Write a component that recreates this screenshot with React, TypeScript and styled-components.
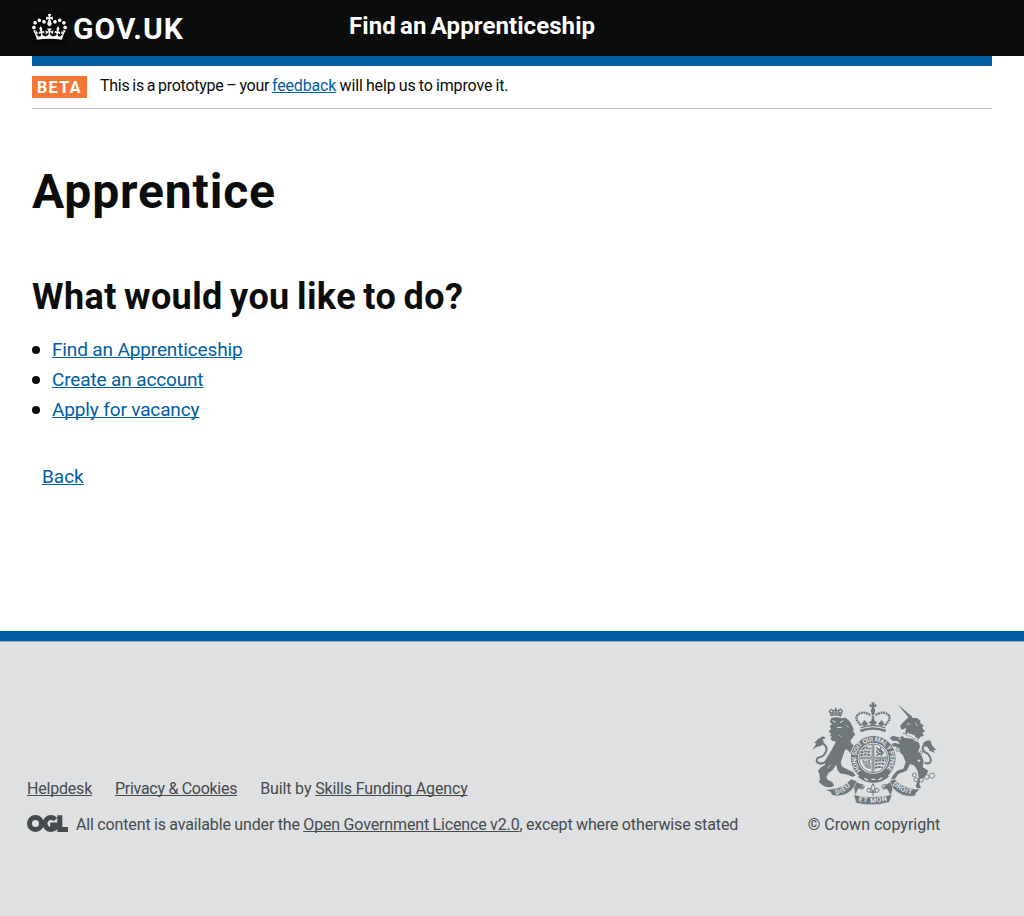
import React from "react";
import styled, { createGlobalStyle, css } from "styled-components";

const GlobalStyle = createGlobalStyle`
  * { box-sizing: border-box; }
  body {
    margin: 0;
    background: #fff;
    color: #0b0c0c;
    font-family: Roboto, "Liberation Sans", Arial, sans-serif;
  }
`;

const Page = styled.div`
  display: flex;
  flex-direction: column;
  min-height: 916px;
`;

const Header = styled.header`
  display: flex;
  height: 56px;
  padding: 0 32px;
  background: #0b0c0c;
  color: #fff;
`;

const LogoLink = styled.a`
  display: flex;
  align-items: flex-start;
  width: 317px;
  padding-top: 14px;
  color: #fff;
  text-decoration: none;
`;

const CrownBox = styled.span`
  display: flex;
  width: 35px;
  height: 30px;
  margin-right: 6px;
  background: #070808;
`;

const Wordmark = styled.span`
  font-size: 30px;
  font-weight: 700;
  line-height: 30px;
  letter-spacing: 1px;
`;

const ServiceName = styled.span`
  padding-top: 11px;
  font-size: 24px;
  font-weight: 700;
  line-height: 30px;
  white-space: nowrap;
  letter-spacing: 0.08px;
  word-spacing: -1.8px;
`;

const Container = styled.div`
  margin: 0 32px;
`;

const BlueBar = styled.div`
  height: 10px;
  background: #005ea5;
`;

const PhaseBanner = styled.div`
  display: flex;
  align-items: flex-start;
  height: 43px;
  padding-top: 10px;
  border-bottom: 1px solid #bfc1c3;
`;

const PhaseTag = styled.strong`
  width: 55px;
  height: 22px;
  margin-right: 13px;
  padding-left: 5px;
  background: #f47738;
  color: #fff;
  font-size: 16px;
  line-height: 23px;
  letter-spacing: 1.4px;
`;

const Link = styled.a<{ $tone?: "blue" | "grey"; $spacing?: number }>`
  color: ${(p) => (p.$tone === "grey" ? "#454a4c" : "#005ea5")};
  text-decoration: underline;
  text-decoration-thickness: 1px;
  text-underline-offset: 1px;
  text-decoration-skip-ink: none;
  ${(p) => p.$spacing !== undefined && css`letter-spacing: ${p.$spacing}px;`}
`;

const PhaseText = styled.span`
  font-size: 16px;
  line-height: 20px;
  letter-spacing: -0.16px;
  word-spacing: -0.5px;
`;

const PhaseIntro = styled.span`
  letter-spacing: -0.28px;
  word-spacing: -0.8px;
`;

const Heading = styled.h1`
  margin: 55px 0 0;
  font-size: 48px;
  font-weight: 700;
  line-height: 56px;
  letter-spacing: 0.85px;
`;

const SubHeading = styled.h2`
  margin: 56px 0 0;
  font-size: 36px;
  font-weight: 700;
  line-height: 42px;
  letter-spacing: 0.4px;
  word-spacing: -2px;
`;

const LinkList = styled.ul`
  margin: 17px 0 0;
  padding: 0;
  list-style: none;
`;

const LinkItem = styled.li`
  display: flex;
  align-items: center;
  gap: 12px;
  height: 30px;
  font-size: 19px;
  line-height: 30px;
  letter-spacing: -0.14px;

  &::before {
    content: "";
    width: 8px;
    height: 8px;
    border-radius: 50%;
    background: #0b0c0c;
  }
`;

const BackRow = styled.p`
  margin: 37px 0 0 10px;
  font-size: 19px;
  line-height: 30px;
`;

const Main = styled.main`
  display: flow-root;
  height: 522px;
`;

const Footer = styled.footer`
  display: flex;
  flex: 1;
  border-top: 10px solid #005ea5;
  background: #dee0e2;
  box-shadow: inset 0 1px 0 #a1acb2;
  color: #454a4c;
  font-size: 16px;
  line-height: 20px;
`;

const FooterMeta = styled.div`
  width: 808px;
  padding: 138px 0 0 27px;
  white-space: nowrap;
  letter-spacing: -0.13px;
`;

const FooterLinks = styled.div`
  display: flex;
  gap: 23px;
`;

const Licence = styled.div`
  display: flex;
  align-items: flex-start;
  gap: 8px;
  margin-top: 16px;
  word-spacing: -0.4px;
`;

const Copyright = styled.div`
  display: flex;
  flex-direction: column;
  align-items: center;
  width: 132px;
  padding-top: 61px;
  white-space: nowrap;
`;

const CopyrightText = styled.span`
  margin-top: 10px;
`;

const Crown = () => (
  <svg width="35" height="26" viewBox="0 0 132 97" preserveAspectRatio="none" aria-hidden="true">
    <path
      fill="#fff"
      fillRule="evenodd"
      d="M25 30.2c3.5 1.5 7.7-.2 9.1-3.7 1.5-3.6-.2-7.8-3.9-9.2-3.6-1.4-7.6.3-9.1 3.9-1.4 3.5.3 7.5 3.9 9zM9 39.5c3.6 1.5 7.8-.2 9.2-3.7 1.5-3.6-.2-7.8-3.9-9.1-3.6-1.5-7.6.2-9.1 3.8-1.4 3.5.3 7.5 3.8 9zM4.4 57.2c3.5 1.5 7.7-.2 9.1-3.8 1.5-3.6-.2-7.7-3.9-9.1-3.5-1.5-7.6.3-9.1 3.8-1.4 3.5.3 7.6 3.9 9.1zm38.3-21.4c3.5 1.5 7.7-.2 9.1-3.8 1.5-3.6-.2-7.7-3.9-9.1-3.6-1.5-7.6.3-9.1 3.8-1.3 3.6.4 7.7 3.9 9.1zm64.4-5.6c-3.6 1.5-7.8-.2-9.1-3.7-1.5-3.6.2-7.8 3.8-9.2 3.6-1.4 7.7.3 9.2 3.9 1.3 3.5-.4 7.5-3.9 9zm15.9 9.3c-3.6 1.5-7.7-.2-9.1-3.7-1.5-3.6.2-7.8 3.7-9.1 3.6-1.5 7.7.2 9.2 3.8 1.5 3.5-.3 7.5-3.8 9zm4.7 17.7c-3.6 1.5-7.8-.2-9.2-3.8-1.5-3.6.2-7.7 3.9-9.1 3.6-1.5 7.7.3 9.2 3.8 1.3 3.5-.4 7.6-3.9 9.1zM89.3 35.8c-3.6 1.5-7.8-.2-9.2-3.8-1.4-3.6.2-7.7 3.9-9.1 3.6-1.5 7.7.3 9.2 3.8 1.4 3.6-.3 7.7-3.9 9.1zM69.7 17.7l8.9 4.7V9.3l-8.9 2.8c-.2-.3-.5-.6-.9-.9L72.4 0H59.6l3.5 11.2c-.3.3-.6.5-.9.9l-8.8-2.8v13.1l8.8-4.7c.3.3.6.7.9.9l-5 15.4v.1c-.2.8-.4 1.6-.4 2.4 0 4.1 3.1 7.5 7 8.1h.2c.3 0 .7.1 1 .1.4 0 .7 0 1-.1h.2c4-.6 7.1-4.1 7.1-8.1 0-.8-.1-1.7-.4-2.4V34l-5.1-15.4c.4-.2.7-.6 1-.9zM66 92.8c16.9 0 32.8 1.1 47.1 3.2 4-16.9 8.9-26.7 14-33.5l-9.6-3.4c1 4.9 1.1 7.2 0 10.2-1.5-1.4-3-4.3-4.2-8.7L108.6 76c2.8-2 5-3.2 7.5-3.3-4.4 9.4-10 11.9-13.6 11.2-4.3-.8-6.3-4.6-5.6-7.9 1-4.7 5.7-5.9 8-.5 4.3-8.7-3-11.4-7.6-8.8 7.1-7.2 7.9-13.5 2.1-21.1-8 6.1-8.1 12.3-4.5 20.8-4.7-5.4-12.1-2.5-9.5 6.2 3.4-5.2 7.9-2 7.2 3.1-.6 4.3-6.4 7.8-13.5 7.2-10.3-.9-10.9-8-11.2-13.8 2.5-.5 7.1 1.8 11 7.3L80.2 60c-4.1 4.4-8 5.3-12.3 5.4 1.4-4.4 8-11.6 8-11.6H55.5s6.4 7.2 7.9 11.6c-4.2-.1-8-1-12.3-5.4l1.4 16.4c3.9-5.5 8.5-7.7 10.9-7.3-.3 5.8-.9 12.8-11.1 13.8-7.2.6-12.9-2.9-13.5-7.2-.7-5 3.8-8.3 7.1-3.1 2.7-8.7-4.6-11.6-9.4-6.2 3.7-8.5 3.6-14.7-4.6-20.8-5.8 7.6-5 13.9 2.2 21.1-4.7-2.6-11.9.1-7.7 8.8 2.3-5.5 7.1-4.2 8.1.5.7 3.3-1.3 7.1-5.7 7.9-3.5.7-9-1.8-13.5-11.2 2.5.1 4.7 1.3 7.5 3.3l-4.7-15.4c-1.2 4.4-2.7 7.2-4.3 8.7-1.1-3-.9-5.3 0-10.2l-9.5 3.4c5 6.9 9.9 16.7 14 33.5 14.8-2.1 30.8-3.2 47.7-3.2z"
    />
  </svg>
);

const OglLogo = () => (
  <svg width="41" height="18" viewBox="0 0 41 18" role="img" aria-label="Open Government Licence">
    <g fill="none" stroke="#454a4c" strokeWidth="5">
      <circle cx="8.5" cy="8.5" r="6" />
      <path d="M28.4 4.6A6 6 0 1 0 28.4 12.6V10H23.2" />
      <path d="M32.8 0.3V14.5H41" />
    </g>
  </svg>
);

const INK = "#6f777b";
const PAPER = "#dee0e2";

const Crest = () => (
  <svg width="125" height="103" viewBox="36 35 375 309" aria-hidden="true">
    <defs>
      <path id="garter" d="M178 244A58 58 0 1 1 262 244" />
      <path id="dieu" d="M108 314Q135 308 157 281" />
      <path id="mon" d="M175 332Q218 344 264 330" />
      <path id="droit" d="M277 282Q300 307 338 313" />
    </defs>

    {/* lion */}
    <g fill={INK}>
      <path d="M92 78L86 62L93 55L103 60L107 49L112 60L122 54L129 61L123 79Q107 73 92 78Z" />
      <path d="M94 83Q108 78 126 84L137 82L145 89L151 96L157 108L162 119L158 122L166 132L160 139L151 151L156 162L164 167L165 178L163 190L168 202L163 214L153 207L154 194L147 183L137 176L131 189L126 205L122 217L127 229L144 238L159 245L167 256L157 259L143 253L120 249L113 240L108 223L98 239L85 248L79 262L85 270L97 275L102 286L93 291L78 290L66 283L57 276L60 266L58 251L54 241L63 231L75 224L76 210L86 193L98 173L108 154L97 151L91 145L96 139L89 137L94 130L86 124L93 115L89 107L96 101L89 94Z" />
      <path d="M37 178L49 160L43 157L54 146L69 138L78 143L67 148L72 154L63 167L49 170Z" />
    </g>
    <path d="M64 158Q85 167 78 184Q70 201 54 202Q47 208 52 216Q63 226 84 210" fill="none" stroke={INK} strokeWidth="6" />
    <path d="M97 91L107 96M120 97L130 91M111 111L125 112" stroke={PAPER} strokeWidth="3" />
    <path d="M91 71L125 71" stroke={PAPER} strokeWidth="2" strokeDasharray="4 3" />
    <g fill={PAPER}>
      <circle cx="94" cy="63" r="3" />
      <circle cx="103" cy="65" r="2.5" />
      <circle cx="112" cy="65" r="2.5" />
      <circle cx="121" cy="63" r="3" />
    </g>
    <path d="M138 104L146 112M116 133L124 140M83 234L93 222" stroke={PAPER} strokeWidth="2" />

    {/* unicorn */}
    <g fill={INK}>
      <path d="M293 42L337 80L330 87Z" />
      <path d="M333 75L336 82L350 83L362 91L360 98L371 105L367 112L375 124L367 126L371 137L362 139L356 147L333 130L315 131L318 113L305 118L300 107L310 96L320 85Z" />
      <path d="M313 142L337 145L357 157L360 170L355 182L365 196L371 213L368 230L385 241L377 258L363 267L358 282L363 293L351 294L347 286L356 263L353 242L344 226L330 221L320 241L295 251L285 266L273 267L278 256L291 241L310 235L317 216L309 195L299 185L299 174L283 168L273 179L282 186L276 194L263 181L268 165L283 157L300 162L293 152L277 151L269 143L279 136L301 142L306 136Z" />
      <path d="M368 160L377 152L390 150L397 166L410 180L400 178L405 188L389 181L381 168L374 169Z" />
    </g>
    <path d="M387 171Q375 154 368 171Q367 184 383 190Q396 203 391 215Q386 223 374 217" fill="none" stroke={INK} strokeWidth="6" />
    <path d="M308 132L318 138L324 130L333 142L341 136L347 150L355 147" fill="none" stroke={PAPER} strokeWidth="5" />
    <path d="M309 129L358 151" stroke={INK} strokeWidth="3" strokeDasharray="5 4" />
    <path d="M320 101L331 101M346 97L352 107" stroke={PAPER} strokeWidth="2.5" />
    <g fill={PAPER} stroke={INK} strokeWidth="2.5">
      <circle cx="364" cy="186" r="4" />
      <circle cx="357" cy="211" r="5" />
      <circle cx="343" cy="254" r="6" />
      <circle cx="348" cy="268" r="6" />
      <circle cx="364" cy="269" r="6" />
      <circle cx="380" cy="260" r="7" />
      <circle cx="396" cy="256" r="8" />
      <circle cx="293" cy="178" r="5" />
      <circle cx="299" cy="145" r="4" />
    </g>

    {/* crown over the shield */}
    <g fill="none" stroke={INK}>
      <path d="M183 105Q164 87 171 76Q187 58 212 75M255 105Q274 87 267 76Q251 58 226 75" strokeWidth="7" strokeDasharray="6 2" />
      <path d="M219 68V100" strokeWidth="8" strokeDasharray="6 2" />
      <path d="M181 122Q219 107 257 122" strokeWidth="8" />
      <path d="M181 113Q219 98 257 113" strokeWidth="4" />
    </g>
    <g fill={INK}>
      <path d="M214 36H224L222 43L229 41V51L222 49L224 58H214L216 49L209 51V41L216 43Z" />
      <circle cx="219" cy="62" r="7" />
      <path d="M219 84L225 92L231 94L226 103H212L207 94L213 92ZM193 89L199 95L205 100L195 107L185 105L187 97ZM245 89L251 97L253 105L243 107L234 100L240 95Z" />
    </g>

    {/* garter and quartered shield */}
    <circle cx="220" cy="204" r="57" fill={PAPER} stroke={INK} strokeWidth="21" />
    <circle cx="220" cy="204" r="69" fill="none" stroke={PAPER} strokeWidth="3" />
    <text fill={PAPER} fontSize="20" fontWeight="700" dy="7">
      <textPath href="#garter" textLength="265" lengthAdjust="spacingAndGlyphs">HONI SOIT QUI MAL Y PENSE</textPath>
    </text>
    <path d="M182 249Q219 284 260 247L267 259Q222 295 174 261Z" fill={INK} />
    <path d="M193 264L204 270M214 267L227 267M235 269L247 262" stroke={PAPER} strokeWidth="4" />
    <circle cx="220" cy="204" r="43" fill={PAPER} stroke={INK} strokeWidth="2.5" />
    <g fill="none" stroke={INK}>
      <path d="M219 162V245M179 203H263" strokeWidth="8" />
      <path d="M187 177Q196 170 212 176M183 187Q196 180 212 186M182 195Q196 190 212 195M226 213Q240 207 258 212M225 223Q240 217 256 222M225 233Q237 227 249 232" strokeWidth="6" strokeDasharray="8 2" />
      <path d="M228 172L248 184L244 194L230 185L235 177M243 171L239 183L252 190M229 195L242 190" strokeWidth="4" />
      <path d="M188 209Q194 218 208 209L211 234Q193 235 188 209M194 215L200 230M199 215L204 232M204 213L208 232" strokeWidth="2.5" />
    </g>
    <path d="M219 162V245M179 203H263" stroke={PAPER} strokeWidth="2" />

    {/* motto ribbon */}
    <g fill={INK} stroke={PAPER} strokeWidth="2">
      <path d="M160 269L183 281L193 292L174 297L166 317L162 296Z" />
      <path d="M278 269L258 283L247 291L262 298L272 318L278 297Z" />
      <path d="M88 297Q130 295 153 266L171 272Q163 292 154 300Q130 323 96 315L91 305L76 299Z" />
      <path d="M269 271L284 266Q304 290 343 296L360 296L348 308L346 317Q306 323 280 295Z" />
      <path d="M161 313Q217 328 277 312L268 336Q218 350 168 338Z" />
    </g>
    <g fill={PAPER} fontSize="21" fontWeight="700">
      <text><textPath href="#dieu" textLength="52">DIEU</textPath></text>
      <text><textPath href="#mon" textLength="88">ET MON</textPath></text>
      <text><textPath href="#droit" textLength="66">DROIT</textPath></text>
    </g>
    <g fill="none" stroke={INK} strokeWidth="3">
      <path d="M219 280L225 292L219 306L213 292ZM213 304C202 309 197 300 204 294Q211 291 214 304M225 304C236 309 241 300 234 294Q227 291 224 304M211 306H227M219 306V317" />
      <path d="M179 282Q198 281 190 295Q181 299 180 291M259 282Q240 281 248 295Q257 299 258 291" />
    </g>
  </svg>
);

export default function App() {
  return (
    <Page>
      <GlobalStyle />
      <Header>
        <LogoLink href="#">
          <CrownBox><Crown /></CrownBox>
          <Wordmark>GOV.UK</Wordmark>
        </LogoLink>
        <ServiceName>Find an Apprenticeship</ServiceName>
      </Header>
      <Container>
        <BlueBar />
        <PhaseBanner>
          <PhaseTag>BETA</PhaseTag>
          <PhaseText>
            <PhaseIntro>This is a prototype – your </PhaseIntro>
            <Link href="#">feedback</Link> will help us to improve it.
          </PhaseText>
        </PhaseBanner>
        <Main>
          <Heading>Apprentice</Heading>
          <SubHeading>What would you like to do?</SubHeading>
          <LinkList>
            <LinkItem><Link href="#">Find an Apprenticeship</Link></LinkItem>
            <LinkItem><Link href="#">Create an account</Link></LinkItem>
            <LinkItem><Link href="#">Apply for vacancy</Link></LinkItem>
          </LinkList>
          <BackRow><Link href="#">Back</Link></BackRow>
        </Main>
      </Container>
      <Footer>
        <FooterMeta>
          <FooterLinks>
            <Link href="#" $tone="grey" $spacing={-0.2}>Helpdesk</Link>
            <Link href="#" $tone="grey" $spacing={-0.29}>Privacy &amp; Cookies</Link>
            <span>Built by <Link href="#" $tone="grey">Skills Funding Agency</Link></span>
          </FooterLinks>
          <Licence>
            <OglLogo />
            <span>
              All content is available under the <Link href="#" $tone="grey">Open Government Licence v2.0</Link>, except where otherwise stated
            </span>
          </Licence>
        </FooterMeta>
        <Copyright>
          <Crest />
          <CopyrightText>© Crown copyright</CopyrightText>
        </Copyright>
      </Footer>
    </Page>
  );
}
